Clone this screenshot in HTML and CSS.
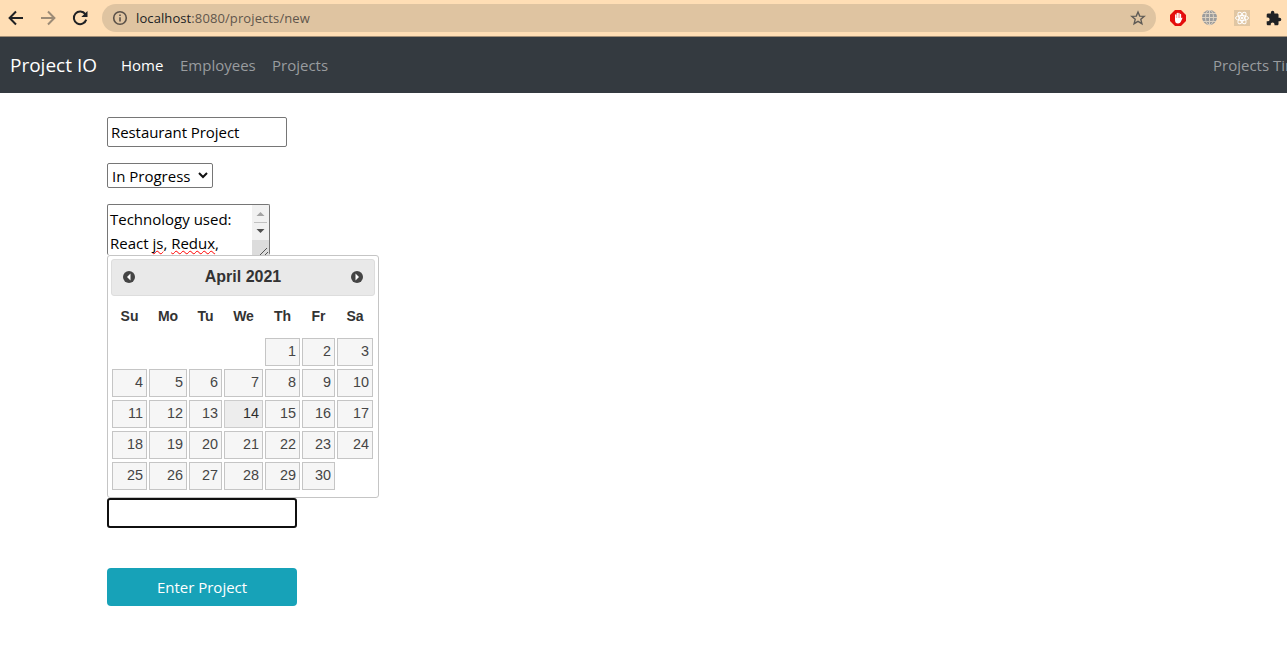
FILE: index.html
```html
<!DOCTYPE html>
<html lang="en">
<head>
<meta charset="utf-8">
<title>Project IO</title>
<link rel="stylesheet" href="styles.css">
</head>
<body>
<header class="browser">
  <svg class="nav-icon" width="92" height="36" viewBox="0 0 92 36" fill="none" stroke-width="2">
    <path d="M23 18H10M16 11.500L9.600 18L16 24.500" stroke="#202124"/>
    <path d="M41 18H54M48 11.500L54.400 18L48 24.500" stroke="#9c8b76"/>
    <path d="M85.300 14.200A6.300 6.300 0 1 0 86.200 19.600" stroke="#202124"/>
    <path d="M87.500 11V17H81.300Z" fill="#202124"/>
  </svg>
  <div class="address">
    <svg width="16" height="16" viewBox="0 0 16 16" fill="none" stroke="#5a5149" stroke-width="1.600"><circle cx="8" cy="8" r="6.300"/><path d="M8 7.200V11.500M8 4.500V6"/></svg>
    <span class="url"><b>localhost</b>:8080/projects/new</span>
    <svg class="star" width="16" height="16" viewBox="0 0 16 16" fill="none" stroke="#5f5b56" stroke-width="1.400"><path d="M8 2L9.700 6.100L14.200 6.400L10.800 9.300L11.900 13.700L8 11.300L4.100 13.700L5.200 9.300L1.800 6.400L6.300 6.100Z"/></svg>
  </div>
  <div class="extensions">
    <svg width="16" height="16" viewBox="0 0 16 16"><path d="M5 0H11L16 5V11L11 16H5L0 11V5Z" fill="#e40d0d"/><path d="M5.700 9V5M7.300 8V3.300M8.900 8V3.300M10.500 9V4.500" stroke="#fff" stroke-width="1.300" stroke-linecap="round"/><path d="M5 8H11.200L12.300 7.500Q12.800 8 11.400 10.500Q10.500 13.500 8 13.500Q5 13.500 5 10Z" fill="#fff"/></svg>
    <svg width="16" height="16" viewBox="0 0 16 16" fill="none" stroke="#ddd2c2"><circle cx="7.500" cy="7.500" r="7.500" fill="#9c9c9c" stroke="none"/><ellipse cx="7.500" cy="7.500" rx="4" ry="7.500"/><path d="M7.500 0V15M0 7.500H15M1 3.500H14M1 11.500H14"/></svg>
    <svg width="16" height="16" viewBox="0 0 16 16" fill="none" stroke="#fff"><path d="M0 0H16V16H0Z" fill="#e0c6a3" stroke="none"/><ellipse cx="8" cy="8" rx="6.500" ry="2.500"/><ellipse cx="8" cy="8" rx="6.500" ry="2.500" transform="rotate(60 8 8)"/><ellipse cx="8" cy="8" rx="6.500" ry="2.500" transform="rotate(120 8 8)"/><circle cx="8" cy="8" r="1" fill="#fff"/></svg>
    <svg width="16" height="16" viewBox="1 0 23 23" fill="#202124"><path d="M20.500 11H19V7c0-1.100-.9-2-2-2h-4V3.500a2.500 2.500 0 0 0-5 0V5H4c-1.100 0-2 .9-2 2v3.800h1.500a2.700 2.700 0 0 1 0 5.400H2V20c0 1.100.9 2 2 2h3.800v-1.500a2.700 2.700 0 0 1 5.400 0V22H17c1.100 0 2-.9 2-2v-4h1.500a2.500 2.500 0 0 0 0-5z"/></svg>
  </div>
</header>
<nav class="navbar">
  <a class="brand">Project IO</a>
  <a class="link home active">Home</a>
  <a class="link employees">Employees</a>
  <a class="link projects">Projects</a>
  <a class="link timeline">Projects Tim</a>
</nav>
<main class="form">
  <div class="field name"><span>Restaurant Project</span></div>
  <div class="field status"><span>In Progress</span><svg width="10" height="7" viewBox="0 0 10 7" fill="none" stroke="#111" stroke-width="2"><path d="M1 1L5 5L9 1"/></svg></div>
  <div class="field notes">
    <div class="notes-text"><span class="line1">Technology used:</span><br><span class="line2">React <u>js</u>, <u>Redux</u>,</span></div>
    <svg width="17" height="51" viewBox="0 0 17 51"><path d="M0 0H17V51H0Z" fill="#f1f1f1"/><path d="M0 35H17V51H0Z" fill="#dcdcdc"/><path d="M4.500 11L8.500 7L12.500 11Z" fill="#a3a3a3"/><path d="M2 17.500H15" stroke="#c1c1c1"/><path d="M4.500 24L8.500 28L12.500 24Z" fill="#505050"/><path d="M8 50L15 43M13 50L16 47" stroke="#555"/></svg>
  </div>
  <section class="calendar">
    <div class="cal-head">
      <svg width="12" height="12" viewBox="0 0 12 12"><circle cx="6" cy="6" r="6" fill="#444"/><path d="M7.500 2.500V9.500L4 6Z" fill="#fff"/></svg>
      <strong>April 2021</strong>
      <svg width="12" height="12" viewBox="0 0 12 12"><circle cx="6" cy="6" r="6" fill="#444"/><path d="M4.500 2.500V9.500L8 6Z" fill="#fff"/></svg>
    </div>
    <div class="week weekdays"><b>Su</b><b>Mo</b><b>Tu</b><b>We</b><b>Th</b><b>Fr</b><b>Sa</b></div>
    <div class="week days">
      <a class="first">1</a><a>2</a><a>3</a>
      <a>4</a><a>5</a><a>6</a><a>7</a><a>8</a><a>9</a><a>10</a>
      <a>11</a><a>12</a><a>13</a><a class="today">14</a><a>15</a><a>16</a><a>17</a>
      <a>18</a><a>19</a><a>20</a><a>21</a><a>22</a><a>23</a><a>24</a>
      <a>25</a><a>26</a><a>27</a><a>28</a><a>29</a><a>30</a>
    </div>
  </section>
  <input class="date" type="text" aria-label="Date">
  <button class="submit" type="button"><span>Enter Project</span></button>
</main>
</body>
</html>
```
FILE: styles.css
```css
* { box-sizing: border-box; }
body { margin: 0; width: 1287px; height: 670px; overflow: hidden; background: #fff; font-family: "Open Sans", "Noto Sans", sans-serif; font-size: 15px; color: #000; }
svg { display: block; flex: none; }
.browser { height: 37px; display: flex; align-items: center; background: #ffdeb5; border-bottom: 1px solid #a18d75; overflow: hidden; }
.address { width: 1054px; height: 28px; margin-left: 10px; padding: 0 10px; border-radius: 14px; background: #dfc4a1; display: flex; align-items: center; }
.url { margin-left: 8px; font-size: 13px; color: #5f564c; white-space: nowrap; letter-spacing: 0.1px; }
.url b { font-weight: 400; color: #202124; }
.star { margin-left: auto; }
.extensions { display: flex; gap: 16px; margin-left: 14px; }
.navbar { height: 56px; background: #343a40; display: flex; align-items: center; color: #999c9f; white-space: nowrap; overflow: hidden; padding-left: 10px; }
.brand { flex: none; width: 111px; color: #fff; font-size: 19px; letter-spacing: 0.05px; }
.brand { letter-spacing: -0.0px; }
.link { flex: none; }
.active { color: #fff; }
.home { width: 59px; }
.employees { width: 92px; }
.projects { width: 941px; }
.form { padding: 24px 0 0 107px; display: flex; flex-direction: column; align-items: flex-start; }
.field { border: 1px solid #767676; border-radius: 2px; background: #fff; white-space: nowrap; display: flex; align-items: center; }
.name { width: 180px; height: 30px; padding-left: 3px; letter-spacing: -0.07px; }
.status { width: 106px; height: 25px; margin-top: 16px; padding: 0 4px; justify-content: space-between; }
.notes { width: 163px; height: 51px; margin-top: 16px; border-bottom: 0; align-items: flex-start; justify-content: space-between; overflow: hidden; }
.notes-text { padding: 2px; line-height: 24px; }
.notes u { text-decoration: underline wavy #f00 1px; text-underline-offset: 1px; text-decoration-skip-ink: none; }
.calendar { width: 272px; height: 243px; border: 1px solid #c5c5c5; border-radius: 3px; background: #fff; padding: 3px; font-family: "Liberation Sans", Arial, sans-serif; color: #333; }
.cal-head { height: 37px; display: flex; align-items: center; justify-content: space-between; padding: 0 11px 1px; border: 1px solid #ddd; border-radius: 3px; background: #e9e9e9; font-size: 16px; }
.week { display: grid; grid-template-columns: 35px 38px 33px 39px 35px 33px 36px; column-gap: 2px; margin-left: 1px; font-size: 14.4px; }
.weekdays { height: 42px; line-height: 40px; text-align: center; font-size: 14px; }
.days { grid-auto-rows: 28px; row-gap: 3px; }
.days a { border: 1px solid #c5c5c5; background: #f6f6f6; color: #454545; text-align: right; padding-right: 3px; line-height: 24px; }
.days .first { grid-column: 5; }
.days .today { background: #ededed; border-color: #ccc; color: #2b2b2b; }
.date { width: 190px; height: 30px; border: 2px solid #101010; border-radius: 3px; background: #fff; outline: none; }
.submit { width: 190px; height: 38px; margin-top: 40px; border: 0; border-radius: 4px; background: #17a2b8; color: #fff; font: 15px "Open Sans", sans-serif; }
```
